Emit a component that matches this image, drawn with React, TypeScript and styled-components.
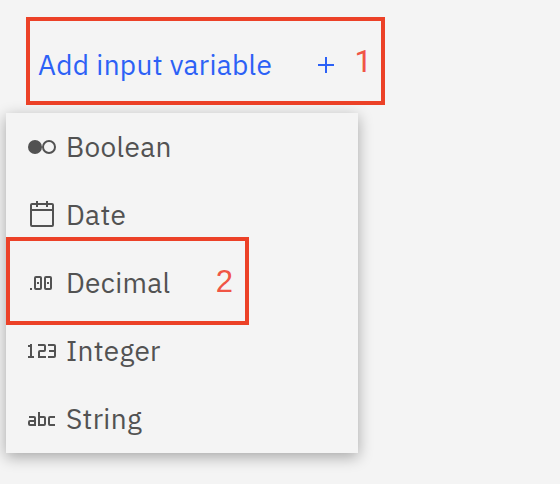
import React from "react";
import styled, { createGlobalStyle } from "styled-components";

const GlobalStyle = createGlobalStyle`
  * { box-sizing: border-box; }
  body {
    margin: 0;
    background: #f4f4f4;
    font-family: "IBM Plex Sans", "Open Sans", sans-serif;
    -webkit-font-smoothing: antialiased;
    overflow: hidden;
  }
`;

const Page = styled.main`
  position: relative;
  width: 560px;
  height: 484px;
  padding: 17px 0 0 6px;
  background: #f4f4f4;
`;

const AddButton = styled.button`
  display: flex;
  align-items: center;
  justify-content: space-between;
  width: 336px;
  height: 96px;
  padding: 0 0 0 32px;
  border: 0;
  background: transparent;
  color: #2c61f6;
  font: inherit;
`;

const Label = styled.span`
  font-size: 28px;
  letter-spacing: 0.32px;
  line-height: 36px;
  white-space: nowrap;
`;

const Icon = styled.svg`
  flex: none;
  width: 32px;
  height: 32px;
  fill: currentColor;
`;

const Menu = styled.ul`
  width: 352px;
  margin: 0;
  padding: 0;
  list-style: none;
  background: #f4f4f4;
  box-shadow: 0 4px 14px rgba(0, 0, 0, 0.32);
`;

const MenuItem = styled.li`
  display: flex;
  align-items: center;
  gap: 8px;
  height: 68px;
  padding-left: 20px;
  color: #525252;
`;

const Callout = styled.div<{ $x: number; $y: number; $w: number; $inset: number; $font: string }>`
  position: absolute;
  left: ${(p) => p.$x}px;
  top: ${(p) => p.$y}px;
  width: ${(p) => p.$w}px;
  height: 88px;
  padding-right: ${(p) => p.$inset}px;
  border: 4px solid #ec4127;
  color: #f05545;
  font: 31px/82px ${(p) => p.$font}, sans-serif;
  text-align: right;
  pointer-events: none;
`;

const items: { name: string; icon: React.ReactNode }[] = [
  {
    name: "Boolean",
    icon: (
      <>
        <circle cx="9" cy="16" r="7" />
        <circle cx="23" cy="16" r="6" fill="none" stroke="currentColor" strokeWidth="2" />
      </>
    ),
  },
  {
    name: "Date",
    icon: <path d="M26 4h-4V2h-2v2h-8V2h-2v2H6a2 2 0 0 0-2 2v20a2 2 0 0 0 2 2h20a2 2 0 0 0 2-2V6a2 2 0 0 0-2-2Zm0 22H6V12h20Zm0-16H6V6h4v2h2V6h8v2h2V6h4Z" />,
  },
  {
    name: "Decimal",
    icon: <path fillRule="evenodd" d="M4 21h2v2H4Z M10 9h4a2 2 0 0 1 2 2v10a2 2 0 0 1-2 2h-4a2 2 0 0 1-2-2V11a2 2 0 0 1 2-2Zm0 2v10h4V11Zm1 4h2v2h-2Z M20 9h4a2 2 0 0 1 2 2v10a2 2 0 0 1-2 2h-4a2 2 0 0 1-2-2V11a2 2 0 0 1 2-2Zm0 2v10h4V11Zm1 4h2v2h-2Z" />,
  },
  {
    name: "Integer",
    icon: <path d="M28 9h-6v2h6v4h-5v2h5v4h-6v2h6a2 2 0 0 0 2-2V11a2 2 0 0 0-2-2Z M20 23h-8v-6a2 2 0 0 1 2-2h4v-4h-6V9h6a2 2 0 0 1 2 2v4a2 2 0 0 1-2 2h-4v4h6Z M6 21V9H4v1H2v2h2v9H2v2h6v-2Z" />,
  },
  {
    name: "String",
    icon: <path d="M29 23h-5a2 2 0 0 1-2-2v-6a2 2 0 0 1 2-2h5v2h-5v6h5Z M18 13h-4V9h-2v14h6a2 2 0 0 0 2-2v-6a2 2 0 0 0-2-2Zm-4 8v-6h4v6Z M8 13H3v2h5v2H4a2 2 0 0 0-2 2v2a2 2 0 0 0 2 2h6v-8a2 2 0 0 0-2-2Zm0 8H4v-2h4Z" />,
  },
];

export default function App() {
  return (
    <>
      <GlobalStyle />
      <Page>
        <AddButton type="button">
          <Label>Add input variable</Label>
          <Icon viewBox="0 0 32 32"><path d="M17 15V8h-2v7H8v2h7v7h2v-7h7v-2Z" /></Icon>
        </AddButton>
        <Menu>
          {items.map((item) => (
            <MenuItem key={item.name}>
              <Icon viewBox="0 0 32 32">{item.icon}</Icon>
              <Label>{item.name}</Label>
            </MenuItem>
          ))}
        </Menu>
        <Callout $x={26} $y={17} $w={359} $inset={9} $font="Roboto">1</Callout>
        <Callout $x={6} $y={237} $w={243} $inset={12} $font='"Liberation Sans"'>2</Callout>
      </Page>
    </>
  );
}
